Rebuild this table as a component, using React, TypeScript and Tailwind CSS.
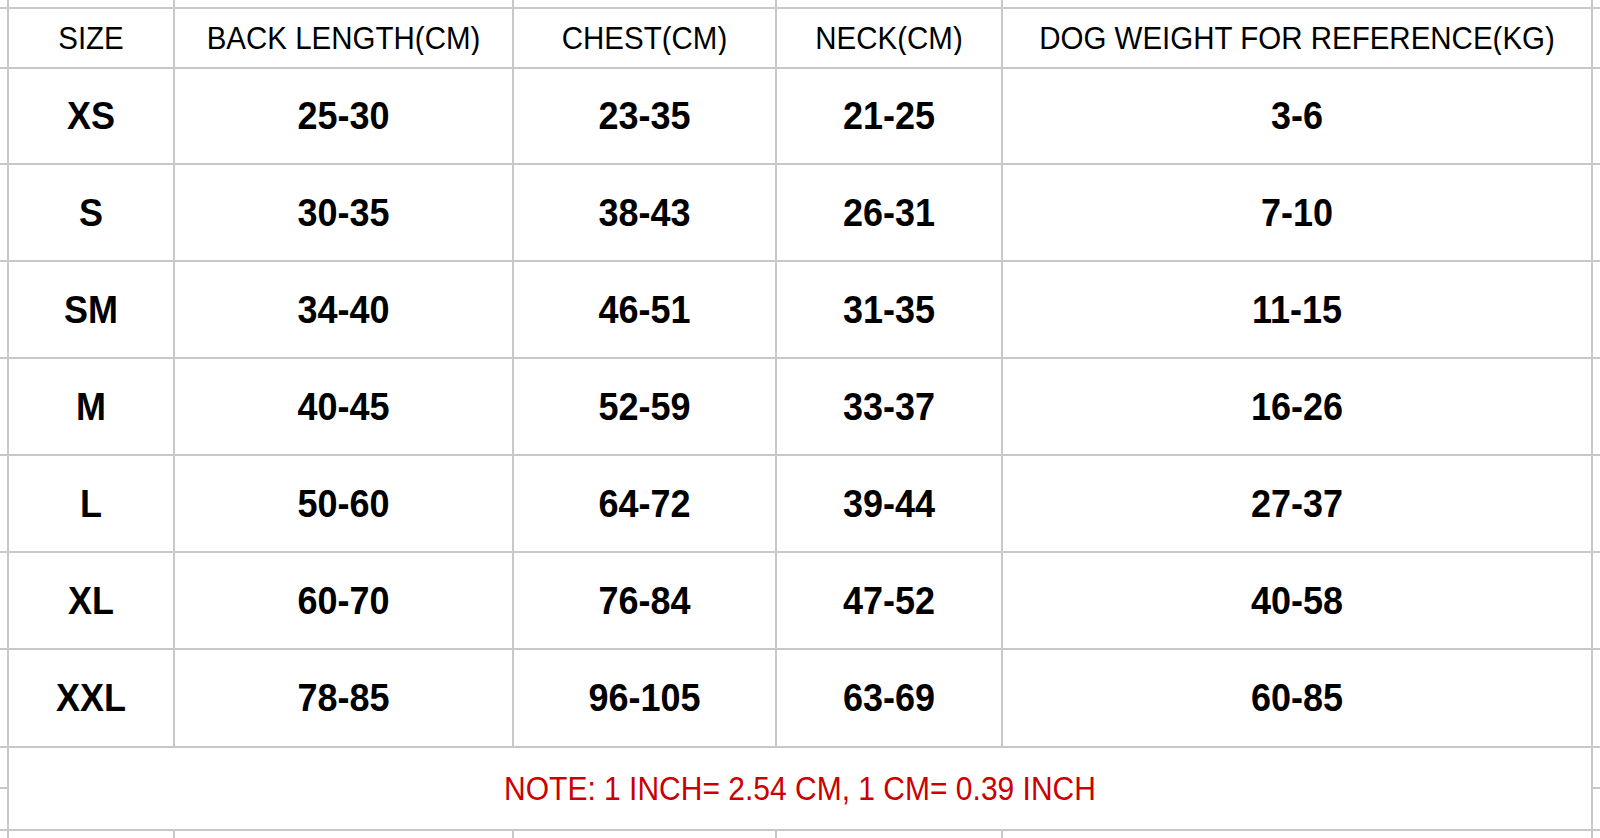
import React from "react";

const headers = ["SIZE", "BACK LENGTH(CM)", "CHEST(CM)", "NECK(CM)", "DOG WEIGHT FOR REFERENCE(KG)"];

const rows: string[][] = [
  ["XS", "25-30", "23-35", "21-25", "3-6"],
  ["S", "30-35", "38-43", "26-31", "7-10"],
  ["SM", "34-40", "46-51", "31-35", "11-15"],
  ["M", "40-45", "52-59", "33-37", "16-26"],
  ["L", "50-60", "64-72", "39-44", "27-37"],
  ["XL", "60-70", "76-84", "47-52", "40-58"],
  ["XXL", "78-85", "96-105", "63-69", "60-85"],
];

function Blank() {
  return <div className="bg-white" />;
}

function EdgeRow() {
  return (
    <>
      {Array.from({ length: 7 }).map((_, i) => (
        <Blank key={i} />
      ))}
    </>
  );
}

export default function App() {
  return (
    <div className="w-[1600px] h-[838px] overflow-hidden bg-white font-['Liberation_Sans',Arial,sans-serif] text-black">
      <div className="grid h-[838px] w-[1600px] grid-cols-[7px_164px_337px_261px_224px_588px_7px] grid-rows-[7px_58px_94px_95px_95px_95px_95px_95px_96px_39px_40px_7px] gap-[2px] bg-[#c8c8c8]">
        {/* partial row above */}
        <EdgeRow />

        {/* header */}
        <Blank />
        {headers.map((h) => (
          <div key={h} className="flex items-center justify-center bg-white">
            <span className="scale-y-[1.06] text-[29.5px] leading-none whitespace-nowrap">{h}</span>
          </div>
        ))}
        <Blank />

        {/* size rows */}
        {rows.map((row) => (
          <React.Fragment key={row[0]}>
            <Blank />
            {row.map((cell, i) => (
              <div key={i} className="flex items-center justify-center bg-white">
                <span className="scale-y-110 text-[36px] font-bold leading-none">{cell}</span>
              </div>
            ))}
            <Blank />
          </React.Fragment>
        ))}

        {/* note, merged over two rows */}
        <Blank />
        <div className="col-span-5 row-span-2 flex items-center justify-center bg-white">
          <span className="scale-y-[1.08] text-[30px] leading-none text-[#cc0000] whitespace-nowrap">
            NOTE: 1 INCH= 2.54 CM, 1 CM= 0.39 INCH
          </span>
        </div>
        <Blank />
        <Blank />
        <Blank />

        {/* partial row below */}
        <EdgeRow />
      </div>
    </div>
  );
}
